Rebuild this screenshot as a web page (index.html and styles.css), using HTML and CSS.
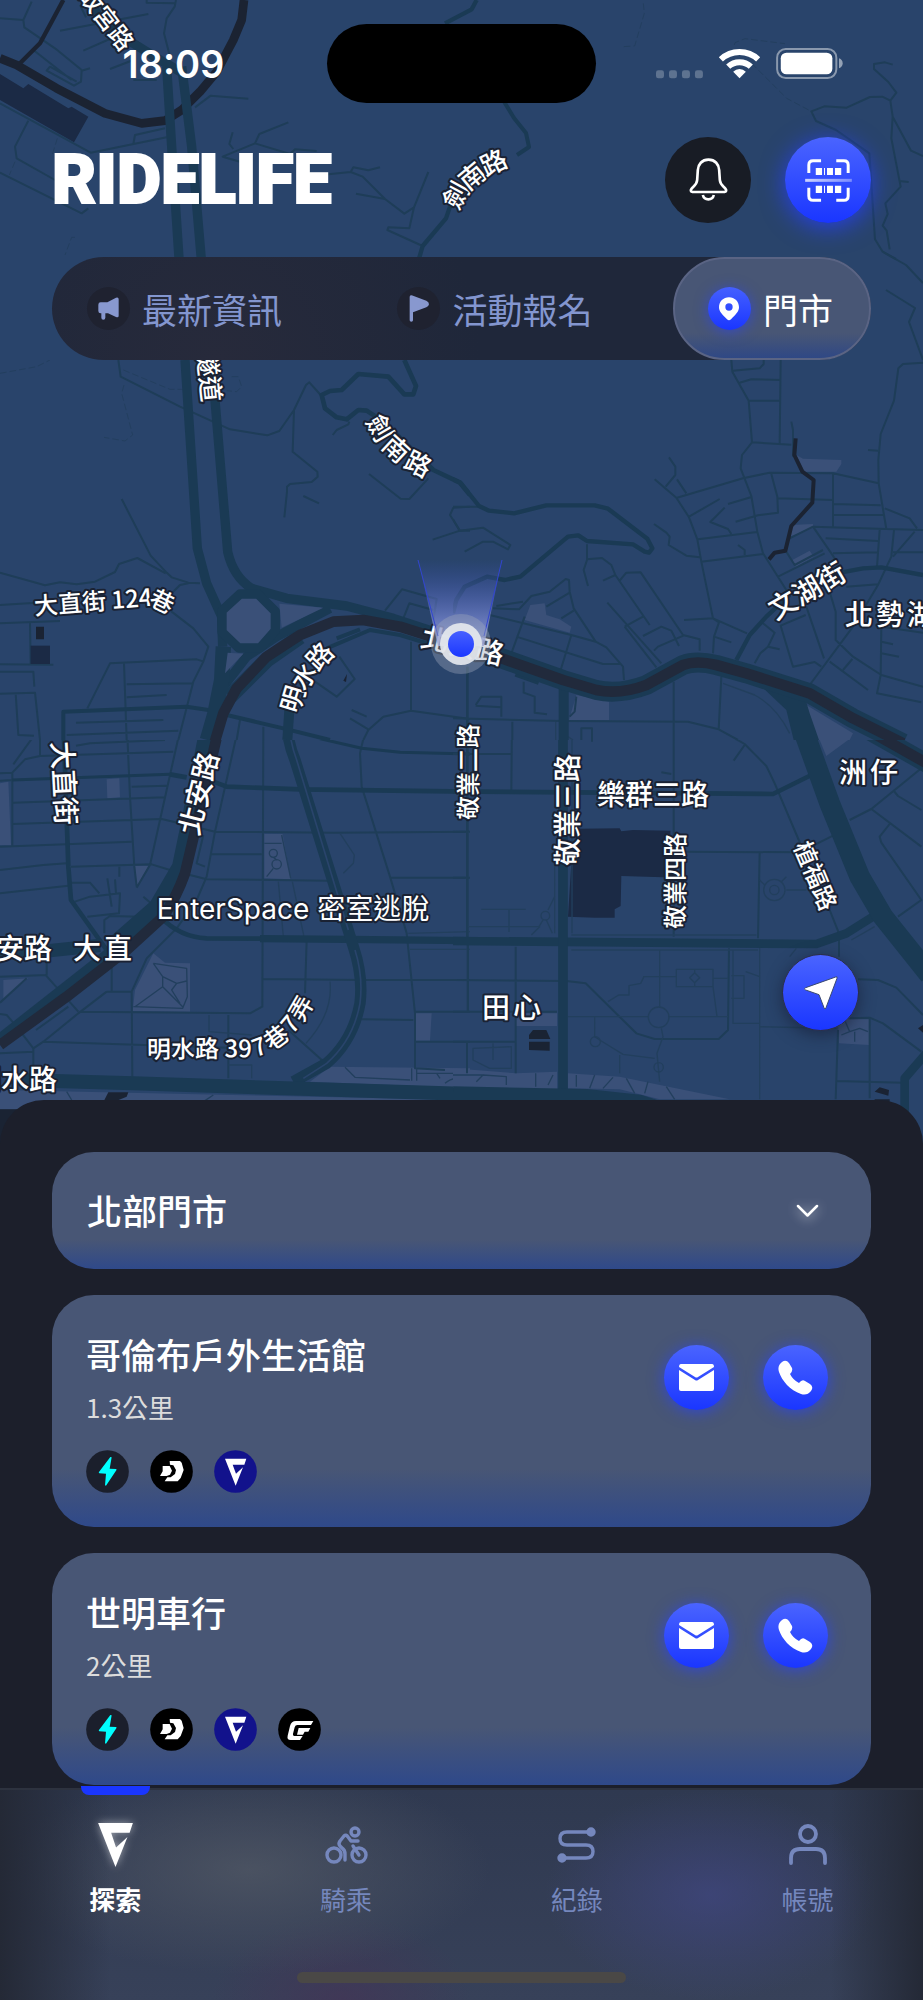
FILE: index.html
```html
<!DOCTYPE html>
<html lang="zh-Hant">
<head>
    <meta charset="UTF-8">
    <meta name="viewport" content="width=device-width, initial-scale=1.0">
    <title>RIDELIFE</title>
    <link rel="stylesheet" href="styles.css">
</head>
<body>

    <!-- Map Section -->
    <section class="map-view">
        <svg class="map" viewBox="0 0 923 1148" preserveAspectRatio="xMidYMin slice" role="img" aria-label="門市地圖">
            <defs>
                <linearGradient id="beam" x1="0" y1="0" x2="0" y2="1">
                    <stop offset="0" stop-color="#4256d8" stop-opacity="0"/>
                    <stop offset="1" stop-color="#a4aeea" stop-opacity="0.9"/>
                </linearGradient>
                <linearGradient id="dot" x1="0" y1="0" x2="0" y2="1">
                    <stop offset="0" stop-color="#4660ff"/>
                    <stop offset="1" stop-color="#1c38ff"/>
                </linearGradient>
                <path id="p-gugong" d="M86,-11 L142,61"/>
                <path id="p-jiannan1" d="M449,206 Q460,169 514,152"/>
                <path id="p-tunnel" d="M209,350 L215,408"/>
                <path id="p-jiannan2" d="M376,415 Q393,456 438,469"/>
                <path id="p-124" d="M34,604 L150,595 Q158,595 182,610"/>
                <path id="p-mingshui" d="M288,711 Q292,674 338,636"/>
                <path id="p-397" d="M147,1047 L254,1046 Q290,1036 310,984"/>
            </defs>

            <!-- North west -->
            <svg width="500" height="360" viewBox="0 0 1500 1080">
                <path class="building" d="M0,222 L70,265 L85,252 L205,325 L215,320 L265,350 L222,427 L0,300Z"/>
                <path class="lane" d="M0,310 L272,458 L500,412 M0,518 L245,640 L265,625 M85,362 L45,440 L50,475 L165,540 M95,5 L70,60 L73,82 L165,145 L245,210 L243,245 L222,257 L140,212 L150,200 L230,245 M0,55 L70,60 M270,205 L245,212 M100,150 L215,240 M180,92 L445,42 M240,15 L258,52 M250,152 L350,108 M440,0 V8 L525,10 M528,0 L524,20 L500,55 L492,100 L510,170 M330,207 L400,180 M400,240 H470 M585,322 L632,287 L745,296 M400,432 L405,405 L495,385 M865,367 L778,402 L765,430 L668,470 L720,485 M765,430 L870,462 L885,448 L950,453 M698,397 L688,432 L700,447 M985,523 L1052,516 L1060,502 L1105,511 L1140,502 M1052,516 L1088,530 L1155,597 L1213,641 L1242,622 L1285,516 M1068,581 L1155,597 M1242,622 L1228,685 L1165,682 L1162,690 L1268,738"/>
                <path class="rail" stroke-width="26" d="M0,175 L50,195 L170,265 L315,340 L425,370 L495,362 L545,330 L600,275 L650,215 L700,120 L725,60 L732,0"/>
                <path class="rail" stroke-width="13" d="M190,0 L155,65 L120,130 L60,190"/>
                <path class="road" stroke-width="28" d="M500,200 L515,440 L538,790 M545,200 L575,440 L605,790 M270,0 L300,60 L400,130 L480,180 L550,220"/>
                <path class="road" stroke-width="13" d="M1430,0 L1415,28 L1335,70 M1350,620 L1338,655 L1268,738 L1250,800"/>
                <path class="trail" d="M225,712 L215,712 L195,765 M172,415 L155,470 M45,485 L28,525"/>
            </svg>

            <!-- North east -->
            <svg x="620" width="303" height="260" viewBox="0 0 909 780">
                <path class="lane" d="M818,194 L795,187 L762,192 V207 L805,246 L829,278 L811,302 L787,290 L750,291 L680,323 L613,319 L574,334 L588,363 L648,390 L748,460 L765,718 L788,755 L828,777 M811,302 L818,350 L873,452 L909,468 M818,350 L814,415 L842,560 L796,610 L803,642 L788,677 L800,692 L809,748 M838,543 L866,546"/>
                <path class="trail" d="M70,10 L73,40 L44,138 L8,140 M343,135 L345,128 L375,116 L495,131 M395,190 L500,295 L570,332"/>
            </svg>
            <path class="road" stroke-width="4" d="M503,100 L514,118 L526,133 L529,147 L517,155"/>
            <path class="lane thin" d="M883,252 L906,265 L923,283 M886,290 L915,308 L909,322 L923,360"/>

            <!-- Middle west -->
            <svg y="360" width="470" height="380" viewBox="0 0 1410 1140">
                <path class="lane" d="M355,0 L362,50 L540,140 L690,208 L802,226 L838,213 L882,150 L918,75 L928,67 L962,105 M882,150 L878,275 L952,335 L953,350 L935,366 L870,372 L861,380 V395 L853,472 M1048,185 L1045,193 L1010,210 L998,225 M365,417 L452,587 L497,635 L515,652 L565,668 L600,670 M0,638 L135,676 L180,667 L230,673 L285,665 L345,636 L357,612 L412,594 L497,640 M565,670 L540,675 L510,705 L515,755 L580,805 L625,860 L610,905 L580,965 L535,1140 M0,735 L110,728 M0,790 L180,783 M90,790 L92,912 M0,913 L160,914 M0,935 H100 L103,980 M0,1001 L105,998 L120,1140 M47,1000 L55,1125 L102,1127 M262,1045 L330,910 L590,898 L612,905 M372,910 L380,1140 M380,973 L577,970 M380,1012 L500,1005 M1107,342 L1202,416 L1228,417 L1285,355 M910,408 L957,430 M1410,440 L1360,443 L1350,465 L1380,512 L1298,539 M1380,512 H1410 M1155,752 L1206,688 L1310,717 L1300,780 M1210,775 L1228,730 L1300,750 M1018,890 L1064,957 L1010,1010 L945,965 M1233,845 V1052 M1410,1077 L1233,1052 L1150,1070 L1105,1110 L1090,1140 M1403,920 V1140 M720,1080 L710,1140 M790,1100 V1140 M228,1088 L490,1080 M200,1125 L535,1112 M1055,1050 L1100,1070 M1050,1075 L1105,1108"/>
                <path class="trail" d="M0,40 L110,20 L150,0 M370,30 L510,88 H560 M372,75 L365,100 L398,225 L375,243 L312,232 M695,50 H715 L725,80 L710,95 L680,92"/>
                <path class="building" d="M92,857 H150 V912 H92Z"/>
                <path class="block" d="M108,800 H132 V838 H108Z M1030,962 L1041,942 L1038,966Z"/>
                <path class="road" stroke-width="12" d="M190,1140 V1055 L560,1040 L625,1050 M680,1065 L850,1105 L990,1140 M980,865 L1110,810 L1200,825 L1330,865 M1010,835 L1080,808"/>
                <path class="road" stroke-width="30" d="M868,1050 L862,1140"/>
                <path class="road" stroke-width="14" d="M1213,0 L1248,78 L1240,103 H1213 L1165,50 L1075,42 L1025,90 L990,93 L965,105 L975,145 L1010,172 L1040,178 L1075,150 L1100,152 L1150,185 L1300,330 L1380,368 L1410,405"/>
                <path class="road" stroke-width="28" d="M555,0 L592,565 L620,670 L665,770 L668,860 M640,60 L683,575 Q700,650 755,685 L860,715 L1040,738 L1180,775 L1410,850 M990,745 L830,830 L740,890 L670,980"/>
                <path class="road" stroke-width="46" d="M670,860 L665,960 L645,1060 L622,1140 M690,1010 L800,900 L900,830"/>
                <path class="park" d="M838,731 L970,743 L845,803Z M683,878 L730,881 L675,940Z"/>
                <path class="park road" stroke-width="28" d="M720,702 H774 L826,754 V812 L780,864 H716 L666,816 V752Z"/>
                <path class="highway" stroke-width="32" d="M640,1160 L670,1060 L710,985 L800,890 L900,825 L1000,785 L1090,780 L1200,800 L1320,838 L1420,870"/>
            </svg>

            <!-- Middle east -->
            <svg x="453" y="360" width="470" height="380" viewBox="0 0 1410 1140">
                <path class="park" d="M1030,285 L1050,296 L1165,300 V312 L1150,335 H1055Z M1015,495 L1080,492 V500 L1010,530Z M1018,600 L1070,572 L1082,590 L1028,620Z M232,735 L275,730 L280,765 L320,778 L355,800 L350,818 L215,780Z M370,1005 L468,1025 V1080 H348Z M1060,1035 L1200,1120 L1190,1140 H1090Z"/>
                <path class="lane" d="M835,0 L838,35 L887,122 L897,247 L867,285 L863,325 L895,408 L913,515 L930,580 L1000,690 M840,32 L920,25 L932,12 V0 M860,68 L895,58 L983,60 M887,122 H983 M983,0 L980,250 M897,247 L1015,254 M1015,185 L1020,210 V290 M672,413 L870,355 L950,338 L1140,340 L1277,370 M1410,8 L1350,12 L1336,25 L1323,122 L1283,222 L1276,300 L1277,370 L1300,507 L1410,510 M1245,270 L1275,272 M605,358 L670,413 L708,472 L733,538 L745,605 L780,775 L882,820 M648,292 L667,320 V345 L638,380 M672,358 L700,400 M708,470 L800,417 M735,538 L912,516 M745,605 L930,582 M603,492 L640,518 L650,530 L647,555 L700,587 L740,592 M848,485 L915,466 L975,458 L973,410 L955,342 M825,432 L893,412 M815,443 L772,486 L825,507 L835,522 M973,415 L1140,420 M1140,340 V500 M1140,432 L1283,436 M1140,465 H1290 M975,650 L1115,580 M1010,535 L1080,500 L1300,507 M1080,500 L1135,580 L1155,610 M1000,575 L1025,615 L1110,570 M1118,535 L1275,543 M1140,580 L1275,577 M1280,510 L1272,620 M1323,510 L1315,590 L1275,675 L1200,800 L1070,975 M1295,445 L1370,475 L1392,505 M1385,515 L1320,590 M1320,577 H1410 M1180,680 L1275,673 M1130,695 L1148,755 V840 L1200,890 L1285,945 L1410,980 M1060,740 L1113,895 M1058,765 L983,797 L1020,920 L1085,906 L1105,920 M1285,800 L1283,945 L1272,1000 L1405,1027 M1285,800 L1410,818 M1285,845 L1320,853 M1285,880 L1338,890 M1130,905 L1245,990 M1198,897 L1170,930 M905,910 L922,880 L945,860 L965,818 L930,790 M945,860 L980,868 M693,780 L780,775 L798,787 L783,830 L780,880 M783,830 L835,847 M855,555 L875,570 V585"/>
                <path class="lane" d="M402,553 V600 L392,630 L405,678 M402,598 L447,594 L475,615 L487,645 L450,662 M487,645 L590,795 M690,825 L740,838 V872 M500,662 L520,638 L563,637 L690,825 M463,728 L625,910 M515,800 L570,770 M515,800 L610,922 M570,828 L625,800 L655,812 L678,858 M603,872 L615,860 L693,826 M120,745 L198,748 L235,708 L290,695 L338,657 L348,660 L350,695 L362,745 L428,845 L460,862 L510,920 L513,960 M280,740 L350,698 M110,765 L355,825 L428,845 M325,775 L362,752 M190,830 L450,912 H505 M355,825 L323,930 M215,770 L175,880 M130,738 L210,725 M0,440 H75 M0,478 L20,512 L90,503 L172,555 L165,568 L120,545 H90 L35,575 M0,1075 L330,1083 L705,1085 L797,1108 L855,1140 M662,965 V1140 M805,950 L797,1108 M42,920 V1140 M68,1035 L85,1010 H145 V1070 M68,1037 L145,1042 M178,1085 V1140 M212,965 V998 L245,1010 V1058 L282,1063 M370,1010 L365,1055 L350,1070 M385,1140 V1105 H417 V1140"/>
                <path class="footpath" d="M810,970 L905,1005 Q970,1040 1010,1120 M308,1085 V1140 M345,1130 L360,1140"/>
                <path class="road" stroke-width="13" d="M0,358 L22,368 L78,438 L108,452 L183,460 L280,436 H425 L465,446 L583,536 L598,565 L588,578 L575,575 L540,553 L402,543 L376,526 L345,530 L202,650 L155,660 L102,650 L35,680 L10,720 L0,760 M850,900 L890,825 L940,770 L1010,705 M1150,640 L1230,625 L1285,622 L1410,645"/>
                <path class="road" stroke-width="30" d="M332,970 V1140 M190,935 L260,960"/>
                <path class="road-fill" d="M900,955 L1055,1010 L1070,1060 L1098,1140 H1022 L1000,1050Z"/>
                <path class="rail" stroke-width="12" d="M1028,235 L1024,285 L1048,335 L1082,360 L1078,428 L1015,498 L997,572 L965,578 L948,598"/>
                <path class="road" stroke-width="60" d="M-10,838 L160,900 L330,960 L430,990 Q500,1005 580,975 L690,915 Q730,900 790,915 L880,940 L1070,1000 L1200,1075 L1350,1150"/>
                <path class="highway" stroke-width="32" d="M-10,838 L160,900 L330,960 L430,990 Q500,1005 580,975 L690,915 Q730,900 790,915 L880,940 L1070,1000 L1200,1075 L1350,1150"/>
            </svg>

            <!-- South west -->
            <svg y="740" width="470" height="408" viewBox="0 60 1410 1224">
                <path class="park" d="M0,190 L25,185 L33,375 H0Z M320,178 L358,175 L360,232 L322,235Z M793,342 H848 L872,478 L793,475Z M405,438 H445 L410,500Z M10,780 L85,775 L10,838Z M460,700 L495,728 L570,730 V875 L398,873 L405,810Z M1245,880 H1295 L1290,962 H1248Z M990,1040 L1410,1045 V1104 L930,1085Z M0,1110 L1410,1140 V1168 H0Z"/>
                <path class="block" d="M0,1168 H200 V1284 H0Z M325,1117 H385 L380,1130 L350,1142 H312Z"/>
                <path class="lane" d="M380,0 L390,230 L403,440 L410,500 M547,0 L510,165 L450,435 L410,503 M205,45 L537,32 M228,77 L270,70 L495,60 M0,160 L37,158 L75,118 L120,108 L520,95 M120,0 V105 M102,47 L40,133 M37,160 V378 M0,182 L37,180 M40,248 L493,232 M37,312 L485,297 L645,335 L1000,338 L1410,335 M0,380 L395,365 M0,450 L130,435 L200,430 M213,440 L455,433 L510,450 M0,520 L205,497 M395,200 L500,197 M720,0 L645,335 L620,470 L590,540 L530,625 L440,715 L395,815 M235,880 L130,965 L100,985 L50,920 L20,885 L0,882 M570,465 L620,478 L985,482 M635,403 H785 M790,20 L787,860 L750,880 L240,875 M610,345 L590,430 L615,440 M920,660 L915,820 M787,777 L1085,780 H1410 M395,815 L397,1070 M235,875 L135,763 M320,815 H395 M320,815 L235,880 M335,730 V815 M140,720 V765 L0,770 M80,775 L0,848 M130,965 L685,983 V1075 M100,985 V1060 M0,1000 L100,995 M685,885 V983 M108,930 L205,860 M865,930 L968,1022 M1140,0 L1095,35 L1080,100 L1085,200 L1170,470 L1220,640 L1245,880 V1045 L1335,1050 M1170,473 H1410 M1085,898 L1240,900 M1245,875 H1410 M1245,965 H1410 M1403,0 V875 M215,488 H270 L298,520 M225,545 L270,530 L360,520 L357,580 L262,590 M322,475 L335,560 M358,440 V470 M345,478 L348,520 M313,640 V600 L330,588 L420,590 M430,530 L465,560"/>
                <path class="footpath" d="M835,485 L850,650 M877,485 L912,650 M845,345 L872,475 M1020,340 L1063,405 L1060,430 L1030,460 M990,785 Q1000,880 918,970 M627,885 V935 L755,945 M685,1035 H755 V1075 M460,730 L560,745 L562,830 L548,865 L400,860 M405,860 L488,800 L548,860 M460,730 L488,770 V800 M488,770 L530,790 L560,783 M530,790 L515,810 L540,850 M793,370 H845 M820,412 L830,420 M820,445 L800,470 M1035,1042 L1065,1072 L1230,1080 M1235,1045 V1082 M1250,1045 V1082 M1250,1060 H1400 M1310,1060 L1320,1075 M1335,1090 Q1370,1060 1400,1095 M1225,640 L1410,635 M1230,688 H1410 M200,1115 L215,1140 M640,1125 L615,1142"/>
                <circle class="footpath" cx="820" cy="400" r="12"/>
                <circle class="footpath" cx="830" cy="433" r="14"/>
                <path class="road" stroke-width="14" d="M190,0 L205,440 L213,540 L320,690 M640,185 L680,200 L900,208 L1410,215 M510,163 L560,172 M480,590 Q540,652 620,655 L800,656"/>
                <path class="road" stroke-width="9" d="M37,180 L510,163 M730,0 L870,35 L1085,85 L1200,97 L1410,102"/>
                <path class="road" stroke-width="22" d="M780,656 L1040,658 L1410,662"/>
                <path class="road" stroke-width="34" d="M862,0 Q860,60 885,120 L1060,680 Q1090,770 1080,850 Q1060,960 980,1030 L880,1085"/>
                <path class="median" d="M870,40 Q875,80 890,120 L1045,630 M1065,690 Q1090,770 1080,850 Q1060,960 980,1030 L910,1075"/>
                <path class="road" stroke-width="40" d="M0,694 L150,692 L300,676"/>
                <path class="road" stroke-width="48" d="M628,0 L565,320 L540,440 L470,560 L350,665"/>
                <path class="road" stroke-width="30" d="M350,680 L0,955"/>
                <path class="road" stroke-width="42" d="M60,1080 L400,1090 L1410,1122"/>
                <path class="highway" stroke-width="32" d="M662,0 L600,270 L555,460 Q530,530 490,590 L380,690 L200,830 L0,975"/>
            </svg>

            <!-- South east -->
            <svg x="453" y="740" width="470" height="408" viewBox="0 60 1410 1224">
                <path class="park" d="M188,880 H312 V918 H188Z M1075,0 H1165 L1210,42 L1120,108Z M0,1045 L190,1060 L312,1055 V1108 L0,1104Z M345,1060 L500,1070 L830,1138 H620 L500,1108 L345,1105Z M1155,898 H1250 L1248,975 L1158,970Z"/>
                <path class="building" d="M375,326 L500,325 L505,334 L540,330 L652,332 V470 L630,472 L505,468 L503,558 L485,568 V593 L425,593 L345,590 L355,430Z"/>
                <path class="block" d="M228,945 L240,930 H280 L292,957 H228Z M228,965 H290 V992 L228,990Z M1265,1115 L1280,1102 L1308,1110 L1306,1127Z M1265,1138 H1310 V1145 H1265Z M1395,925 L1410,915 V938Z"/>
                <path class="lane" d="M705,5 L797,28 L875,72 L940,138 L965,190 L1050,390 M662,0 V650 M875,75 L842,122 M797,0 V28 M177,0 L175,210 M42,0 V650 M0,102 H175 M0,335 H38 M0,473 H38 M692,395 L1040,397 L1140,347 M920,397 L915,655 M1130,570 L1158,640 V710 M1155,930 L1148,1138 M0,780 L340,783 L398,790 L550,940 L605,957 H797 L825,930 L828,685 M45,675 V875 M0,875 H312 M188,680 V1060 M0,965 H185 M42,965 V1060 M1215,778 L1275,780 L1330,803 L1410,885 M1190,895 L1250,893 L1290,910 L1405,995 M1250,895 V1135 M1150,1083 L1350,1088 M1190,300 L1255,267 L1405,145 M1255,267 L1405,380 M1320,210 L1335,228 L1405,270 M1310,312 L1280,350 L1285,368 L1405,540 L1335,590 M625,157 L655,162 M385,25 H417 V65"/>
                <path class="footpath" d="M85,568 H218 M168,568 V636 M45,620 H260 L235,645 M305,410 V640 M305,530 L285,570 M270,600 L258,620 M280,600 L298,640 M620,690 V860 M345,890 H585 M645,890 H825 M780,800 L792,890 M570,770 H670 M780,775 H825 M465,845 L497,825 H528 V797 L563,790 L573,770 M670,748 H780 V800 H670Z M725,758 L740,773 L725,788 L710,773Z M725,748 V758 M725,788 V800 M625,925 L630,950 L612,1000 L620,1085 M425,890 V950 L440,960 L510,1003 L605,1015 M500,1005 V1060 M355,690 H915 M355,645 H910 M920,680 V1138 M840,690 V910 H920 M920,920 L1150,925 M60,985 L175,980 V1045 L110,1045 L60,1020Z M120,970 V1020 M345,50 H357 V640 M835,767 H873 V835 H835 M878,755 L920,770 M1000,510 H1060 M920,480 L935,495 M985,485 L1000,470 M1195,660 L1265,620 M1010,710 L1030,685 M0,1065 L90,1065 L70,1085 M90,1065 L160,1070 V1095 M248,1060 V1100 M300,1065 L285,1095 M370,1065 V1100 M425,1065 L410,1105 M480,1072 L450,1105 M520,1075 L545,1120 M585,1085 L575,1120 M640,1100 L665,1138 M1175,900 L1190,935 L1165,945 M1190,935 L1220,925 L1245,935 M1205,935 V965"/>
                <circle class="footpath" cx="617" cy="892" r="31"/>
                <circle class="footpath" cx="964" cy="510" r="32"/>
                <circle class="footpath" cx="964" cy="510" r="14"/>
                <circle class="footpath" cx="277" cy="587" r="13"/>
                <circle class="footpath" cx="427" cy="965" r="15"/>
                <circle class="footpath" cx="617" cy="1042" r="14"/>
                <path class="road" stroke-width="14" d="M0,214 L80,215 L960,222 L1075,165"/>
                <path class="road" stroke-width="26" d="M0,663 L600,668 L1090,672 L1180,640 L1260,590 M1355,1284 V1075 L1420,1000"/>
                <path class="road" stroke-width="29" d="M330,0 V1110"/>
                <path class="road" stroke-width="62" d="M1040,0 L1130,250 L1220,470 L1290,590 L1430,765"/>
                <path class="road" stroke-width="42" d="M0,1120 L400,1128 L560,1145 L700,1190"/>
                <path class="road" stroke-width="56" d="M1170,-12 L1430,135"/>
                <path class="highway" stroke-width="32" d="M1170,-12 L1430,135"/>
            </svg>

            <!-- Labels -->
            <g class="labels">
                <text class="small"><textPath href="#p-gugong">故宮路</textPath></text>
                <text class="curved"><textPath href="#p-jiannan1">劍南路</textPath></text>
                <text class="curved"><textPath href="#p-tunnel">隧道</textPath></text>
                <text class="curved"><textPath href="#p-jiannan2">劍南路</textPath></text>
                <text class="small"><textPath href="#p-124">大直街 124巷</textPath></text>
                <text class="curved"><textPath href="#p-mingshui">明水路</textPath></text>
                <text class="small"><textPath href="#p-397">明水路 397巷7弄</textPath></text>
                <text class="mid" transform="translate(463 644) rotate(13)">北安路</text>
                <text class="mid" transform="translate(806 589) rotate(-30)">文湖街</text>
                <text class="mid" x="859 890 921" y="613">北勢湖</text>
                <text class="mid" x="853 884" y="771">洲仔</text>
                <text class="mid" x="653" y="793">樂群三路</text>
                <text class="mid small" transform="translate(466 772) rotate(-90)">敬業二路</text>
                <text class="mid" transform="translate(566 810) rotate(-90)">敬業三路</text>
                <text class="mid small" transform="translate(673 881) rotate(-90)">敬業四路</text>
                <text class="mid small" transform="translate(817 875) rotate(67)">植福路</text>
                <text class="mid place" x="293" y="909">EnterSpace 密室逃脫</text>
                <text class="mid" x="87 118" y="947">大直</text>
                <text class="mid" x="-17 10 38" y="947">北安路</text>
                <text class="mid" transform="translate(66 783) rotate(87)">大直街</text>
                <text class="mid" transform="translate(197 793) rotate(-76)">北安路</text>
                <text class="mid" x="-13 15 43" y="1078">明水路</text>
                <text class="mid" x="496 527" y="1006">田心</text>
            </g>

            <!-- Current position -->
            <path d="M418,560 H502 L484,646 H438Z" fill="url(#beam)"/>
            <path class="beam-edge" d="M418,560 L438,636 M502,560 L484,636"/>
            <circle cx="461" cy="644" r="30" fill="#9aa6b8" fill-opacity="0.4"/>
            <circle cx="461" cy="644" r="21" fill="#e4e7ed" fill-opacity="0.93"/>
            <circle cx="461" cy="644" r="13" fill="url(#dot)"/>
        </svg>

        <!-- Status Bar -->
        <div class="status-bar">
            <time class="clock">18:09</time>
            <div class="island"></div>
            <svg class="status-icons" viewBox="0 0 562 93" role="img" aria-label="Wi-Fi 與電池">
                <g fill="#fff" fill-opacity="0.25">
                    <rect x="0" y="67" width="24" height="24" rx="7"/>
                    <rect x="39" y="67" width="24" height="24" rx="7"/>
                    <rect x="78" y="67" width="24" height="24" rx="7"/>
                    <rect x="117" y="67" width="24" height="24" rx="7"/>
                </g>
                <path d="M195,34 A82,82 0 0 1 307,34 M217,56 A50,50 0 0 1 285,56" fill="none" stroke="#fff" stroke-width="18"/>
                <path d="M251,91 L232,71 A27,27 0 0 1 270,71Z" fill="#fff"/>
                <rect x="364" y="3" width="178" height="87" rx="26" fill="none" stroke="#fff" stroke-opacity="0.45" stroke-width="6"/>
                <rect x="375" y="14" width="155" height="65" rx="17" fill="#fff"/>
                <path d="M550,31 Q561,35 561,46 Q561,57 550,61Z" fill="#fff" fill-opacity="0.5"/>
            </svg>
        </div>

        <!-- Header -->
        <header class="header">
            <h1 class="logo">RIDELIFE</h1>
            <button class="round-btn dark" type="button" aria-label="通知">
                <svg width="39" height="44" viewBox="0 0 116 132" fill="none" stroke="#fff" stroke-width="8" stroke-linejoin="round">
                    <path d="M58,5 C38,5 27,19 26,36 L24,66 C23,80 15,84 8,91 Q1,100 10,102 H106 Q115,100 108,91 C101,84 93,80 92,66 L90,36 C89,19 78,5 58,5Z"/>
                    <path d="M41,111 A17,17 0 0 0 74,111"/>
                </svg>
            </button>
            <button class="round-btn glow" type="button" aria-label="掃描">
                <svg width="47" height="43" viewBox="0 0 141 130">
                    <defs>
                        <linearGradient id="scan" x1="0" y1="0" x2="1" y2="0">
                            <stop offset="0" stop-color="#fff" stop-opacity="0.75"/>
                            <stop offset="1" stop-color="#fff" stop-opacity="0.35"/>
                        </linearGradient>
                    </defs>
                    <path d="M11,42 V18 Q11,5 24,5 H48 M94,5 H117 Q130,5 130,18 V42 M11,87 V112 Q11,125 24,125 H48 M94,125 H117 Q130,125 130,112 V87" fill="none" stroke="#fff" stroke-width="9"/>
                    <path d="M32,27 H51 V48 H32Z M57,27 H60 V48 H57Z M66,27 H84 V48 H66Z M90,27 H109 V48 H90Z M32,81 H51 V103 H32Z M57,81 H60 V103 H57Z M66,81 H84 V103 H66Z M90,81 H109 V103 H90Z" fill="#fff"/>
                    <rect y="60" width="141" height="9" fill="url(#scan)"/>
                </svg>
            </button>
        </header>

        <!-- Category Tabs -->
        <div class="tabs">
            <button class="tab" type="button">
                <span class="tab-icon">
                    <svg width="21" height="23" viewBox="0 0 63 69" fill="#8898cf"><path d="M8,16 H28 L54,2 Q62,-1 62,7 V56 Q62,63 54,60 L30,49 H22 V62 Q22,68 16,68 Q10,68 10,62 V49 H8 Q1,49 1,42 V23 Q1,16 8,16Z"/></svg>
                </span>
                最新資訊
            </button>
            <button class="tab" type="button">
                <span class="tab-icon">
                    <svg width="20" height="27" viewBox="0 0 60 81" fill="#8898cf"><path d="M2,5 Q2,1 8,1 L52,17 Q60,21 60,28 Q59,34 52,37 L12,52 V76 Q12,80 7,80 Q2,80 2,76Z"/></svg>
                </span>
                活動報名
            </button>
            <button class="tab active" type="button">
                <span class="tab-icon">
                    <svg width="20" height="24" viewBox="0 0 60 70" fill="#fff"><path fill-rule="evenodd" d="M30,0 C13,0 0,13 0,30 C0,43 10,52 24,66 Q30,72 36,66 C50,52 60,43 60,30 C60,13 47,0 30,0Z M30,18 A11,11 0 0 1 30,40 A11,11 0 0 1 30,18Z"/></svg>
                </span>
                門市
            </button>
        </div>

        <button class="locate-btn" type="button" aria-label="目前位置">
            <svg width="36" height="36" viewBox="0 0 108 108"><path d="M98,6 Q104,3 102,10 L69,98 Q66,106 63,98 L48,59 L8,45 Q0,42 8,38Z" fill="#fff" stroke="#3a4a70" stroke-width="3"/></svg>
        </button>
    </section>

    <!-- Shop List -->
    <main class="sheet">
        <div class="region">
            <select class="region-select" id="region" aria-label="地區">
                <option>北部門市</option>
            </select>
            <svg class="chevron" width="23" height="14" viewBox="0 0 23 14" fill="none" stroke="#fff" stroke-width="2.5" stroke-linecap="round" stroke-linejoin="round"><path d="M2,2 L11.5,11.5 L21,2"/></svg>
        </div>

        <article class="card">
            <div class="card-info">
                <h2>哥倫布戶外生活館</h2>
                <p>1.3公里</p>
                <div class="badges">
                    <svg class="badge" viewBox="0 0 129 129"><use href="#brand-bolt"/></svg>
                    <svg class="badge" viewBox="0 0 129 129"><use href="#brand-d"/></svg>
                    <svg class="badge" viewBox="0 0 129 129"><use href="#brand-v"/></svg>
                </div>
            </div>
            <button class="action-btn" type="button" aria-label="寄信"><svg width="35" height="27"><use href="#icon-mail"/></svg></button>
            <button class="action-btn" type="button" aria-label="撥打電話"><svg width="35" height="35"><use href="#icon-phone"/></svg></button>
        </article>

        <article class="card">
            <div class="card-info">
                <h2>世明車行</h2>
                <p>2公里</p>
                <div class="badges">
                    <svg class="badge" viewBox="0 0 129 129"><use href="#brand-bolt"/></svg>
                    <svg class="badge" viewBox="0 0 129 129"><use href="#brand-d"/></svg>
                    <svg class="badge" viewBox="0 0 129 129"><use href="#brand-v"/></svg>
                    <svg class="badge" viewBox="0 0 129 129"><use href="#brand-g"/></svg>
                </div>
            </div>
            <button class="action-btn" type="button" aria-label="寄信"><svg width="35" height="27"><use href="#icon-mail"/></svg></button>
            <button class="action-btn" type="button" aria-label="撥打電話"><svg width="35" height="35"><use href="#icon-phone"/></svg></button>
        </article>
    </main>

    <!-- Bottom Navigation -->
    <nav class="bottom-nav">
        <div class="nav-items">
            <a class="nav-item active" href="#explore">
                <svg width="35" height="44" viewBox="0 0 64 81" fill="#fff"><path d="M0,0 H64 L58,18 H24 L33,45 L54,26 L32,81Z"/></svg>
                探索
            </a>
            <a class="nav-item" href="#ride">
                <svg width="43" height="38" viewBox="0 0 43 38" fill="none" stroke="currentColor" stroke-width="3.4" stroke-linecap="round" stroke-linejoin="round">
                    <circle cx="9" cy="29" r="7"/>
                    <circle cx="34" cy="29" r="7"/>
                    <circle cx="30" cy="6" r="4"/>
                    <path d="M20,34 V28 Q20,24 17,22 L15,20 Q13,18 15,15 L19,10 Q21,8 23,11 L26,15 H33 M28,20 L34,29"/>
                </svg>
                騎乘
            </a>
            <a class="nav-item" href="#records">
                <svg width="39" height="36" viewBox="0 0 39 36" fill="none" stroke="currentColor" stroke-width="3.4">
                    <path d="M34,5 H10 Q3,5 3,11.5 Q3,18 10,18 H29 Q36,18 36,24.5 Q36,31 29,31 H5"/>
                    <circle cx="34" cy="5" r="3" fill="currentColor"/>
                    <circle cx="5" cy="31" r="3" fill="currentColor"/>
                </svg>
                紀錄
            </a>
            <a class="nav-item" href="#account">
                <svg width="38" height="42" viewBox="0 0 38 42" fill="none" stroke="currentColor" stroke-width="3.8" stroke-linecap="round">
                    <circle cx="19" cy="10" r="8"/>
                    <path d="M2,39 V34 Q2,25 11,25 H27 Q36,25 36,34 V39"/>
                </svg>
                帳號
            </a>
        </div>
        <div class="home-bar"></div>
    </nav>

    <!-- Shared icons -->
    <svg class="sprite" aria-hidden="true">
        <symbol id="icon-mail" viewBox="0 0 35 27">
            <path fill="#fff" d="M2,0 H33 Q35,0 35,3 L19,13 Q17.5,14 16,13 L0,3 Q0,0 2,0Z M0,6 L16,16 Q17.5,17 19,16 L35,6 V25 Q35,27 33,27 H2 Q0,27 0,25Z"/>
        </symbol>
        <symbol id="icon-phone" viewBox="0 0 35 35">
            <path fill="#fff" d="M4,2 Q8,-1 11,3 L14,8 Q15,11 12,14 Q15,20 21,23 Q24,19 27,21 L32,24 Q36,27 33,31 Q29,36 23,34 C12,30 4,21 1,12 Q-1,6 4,2Z"/>
        </symbol>
        <symbol id="brand-bolt" viewBox="0 0 129 129">
            <circle cx="64.5" cy="64.5" r="64" fill="#1b1f2c"/>
            <path fill="#0ff" d="M73,21 L77,22 L71,56 L90,57 Q93,58 91,61 L60,107 L57,106 L60,71 L40,70 Q37,69 39,66Z"/>
        </symbol>
        <symbol id="brand-d" viewBox="0 0 129 129">
            <circle cx="64.5" cy="64.5" r="64" fill="#000"/>
            <path fill="#fff" d="M59,33 H90 L95,38 L101,60 L92,84 L83,94 H44 L52,82 H62 L75,72 L78,60 L70,46 L60,44Z M38,48 H59 L66,62 L60,74 L50,78 H30 L38,64Z"/>
        </symbol>
        <symbol id="brand-v" viewBox="0 0 129 129">
            <circle cx="64.5" cy="64.5" r="64" fill="#12128c"/>
            <path fill="#fff" d="M33,26 H97 L91,44 H56 L66,71 L87,52 L65,107Z"/>
        </symbol>
        <symbol id="brand-g" viewBox="0 0 129 129">
            <circle cx="64.5" cy="64.5" r="64" fill="#000"/>
            <path fill="#fff" d="M106,39 L99,51 H58 Q52,51 50,58 L45,77 Q44,84 51,84 H74 L66,96 H38 Q26,96 29,83 L36,54 Q40,39 54,39Z M62,60 H97 L91,71 H80 L75,80 H57Z"/>
        </symbol>
    </svg>

</body>
</html>
```
FILE: styles.css
```css
/* General Styles */
* {
    margin: 0;
    padding: 0;
    box-sizing: border-box;
}
body {
    background-color: #1c1e2a;
    color: #fff;
    font-family: "Noto Sans CJK TC", sans-serif;
    display: flex;
    flex-direction: column;
    min-height: 100vh;
    overflow-x: hidden;
}
button {
    border: none;
    color: inherit;
    font-family: inherit;
    cursor: pointer;
}
.sprite {
    display: none;
}

/* Map */
.map-view {
    position: relative;
    display: flex;
    flex-direction: column;
    min-height: 55vh;
    padding: 24px 52px 0;
}
.map {
    position: absolute;
    top: 0;
    left: 0;
    width: 100%;
    height: calc(100% + 48px);
    background-color: #29446b;
}
.map path,
.map .footpath {
    stroke-linejoin: round;
}
.road,
.rail,
.highway,
.lane,
.trail,
.footpath,
.median,
.beam-edge {
    fill: none;
}
.road {
    stroke: #1a3a54;
}
.road-fill {
    fill: #1a3a54;
}
.highway {
    stroke: #212a3c;
}
.rail {
    stroke: #1b2332;
}
.lane {
    stroke: #1e3d58;
    stroke-width: 6;
}
.lane.thin {
    stroke-width: 2;
}
.footpath {
    stroke: #223f5d;
    stroke-width: 4;
}
.trail {
    stroke: #233f5f;
    stroke-width: 3;
    stroke-dasharray: 20 9;
}
.median {
    stroke: #29446b;
    stroke-width: 5;
}
.park {
    fill: #3a5078;
}
.building {
    fill: #1b2a45;
}
.block {
    fill: #1a2333;
}
.beam-edge {
    stroke: #3145d0;
}

/* Map Labels */
.labels text {
    font-size: 28px;
    font-weight: 500;
    fill: #fff;
    stroke: #1a2233;
    stroke-width: 4px;
    stroke-linejoin: round;
    paint-order: stroke;
    dominant-baseline: central;
}
.labels .mid {
    text-anchor: middle;
}
.labels .curved {
    font-size: 26px;
}
.labels .small {
    font-size: 24px;
}
.labels .place {
    font-family: Inter, "Noto Sans CJK TC", sans-serif;
    font-size: 28px;
    font-weight: 400;
}

/* Status Bar */
.status-bar {
    position: relative;
    display: grid;
    grid-template-columns: 1fr auto 1fr;
    align-items: center;
    justify-items: center;
    margin: 0 -32px;
}
.clock {
    font-family: Inter, sans-serif;
    font-size: 38px;
    font-weight: 600;
}
.island {
    width: 269px;
    height: 79px;
    border-radius: 40px;
    background-color: #000;
}
.status-icons {
    width: 187px;
    height: 31px;
}

/* Header */
.header {
    position: relative;
    display: flex;
    align-items: center;
    gap: 34px;
    margin-top: 34px;
}
.logo {
    flex-grow: 1;
    font-family: Roboto, sans-serif;
    font-size: 68px;
    font-weight: 900;
    line-height: 86px;
    -webkit-text-stroke: 2px #fff;
}
.round-btn {
    display: flex;
    align-items: center;
    justify-content: center;
    width: 86px;
    height: 86px;
    border-radius: 50%;
}
.round-btn.dark {
    background-color: #181c25;
}
.round-btn.glow {
    background: linear-gradient(#4a64ff, #1a36ff);
    box-shadow: 0 4px 24px rgba(38, 64, 255, 0.85);
}

/* Category Tabs */
.tabs {
    position: relative;
    display: flex;
    justify-content: space-between;
    margin-top: 34px;
    border-radius: 52px;
    background: radial-gradient(circle at 20% 100%, #272a3b, #1f273a 40%);
}
.tab {
    display: flex;
    align-items: center;
    gap: 12px;
    height: 103px;
    padding: 0 36px 0 33px;
    border: 2px solid transparent;
    border-radius: 52px;
    background: none;
    color: #8396cf;
    font-size: 35px;
    line-height: 42px;
    white-space: nowrap;
}
.tab.active {
    background: linear-gradient(#485675 75%, #2f4885);
    border-color: #5a6484;
    color: #fff;
}
.tab-icon {
    display: flex;
    align-items: center;
    justify-content: center;
    width: 43px;
    height: 43px;
    border-radius: 50%;
    background-color: #1f2230;
}
.tab.active .tab-icon {
    background: linear-gradient(#4560ff, #1a36ff);
    box-shadow: 0 2px 14px rgba(38, 64, 255, 0.6);
}

.locate-btn {
    position: relative;
    display: flex;
    align-items: center;
    justify-content: center;
    align-self: flex-end;
    width: 77px;
    height: 77px;
    margin: auto 12px 69px 0;
    border: 1px solid #2a2c4a;
    border-radius: 50%;
    background: linear-gradient(#4a64ff, #1a36ff);
    box-shadow: 0 4px 16px rgba(20, 26, 50, 0.6);
}

/* Shop List */
.sheet {
    position: relative;
    flex-grow: 1;
    display: flex;
    flex-direction: column;
    gap: 26px;
    padding: 52px 52px 3px;
    border-radius: 44px 44px 0 0;
    background-color: #1c1f2b;
}
.region {
    position: relative;
}
.region-select {
    display: block;
    width: 100%;
    height: 117px;
    padding: 0 35px 2px;
    border: none;
    border-radius: 42px;
    appearance: none;
    background: linear-gradient(#485675 75%, #2f498a);
    color: #fff;
    font-family: inherit;
    font-size: 35px;
    font-weight: 500;
}
.chevron {
    position: absolute;
    top: 52px;
    right: 52px;
    filter: drop-shadow(0 2px 6px rgba(255, 255, 255, 0.7));
    pointer-events: none;
}
.card {
    display: flex;
    gap: 34px;
    padding: 38px 43px 34px 34px;
    border-radius: 42px;
    background: linear-gradient(#485675 75%, #2f498a);
}
.card-info {
    flex-grow: 1;
}
.card h2 {
    font-size: 35px;
    font-weight: 500;
    line-height: 42px;
}
.card p {
    margin-top: 16px;
    color: #dcdcdc;
    font-size: 26px;
    line-height: 32px;
}
.badges {
    display: flex;
    gap: 21px;
    margin-top: 27px;
}
.badge {
    width: 43px;
    height: 43px;
}
.action-btn {
    display: flex;
    align-items: center;
    justify-content: center;
    width: 65px;
    height: 65px;
    margin-top: 12px;
    border-radius: 50%;
    background: linear-gradient(#4a64ff, #1a36ff);
    box-shadow: 0 2px 16px rgba(38, 64, 255, 0.7);
}

/* Bottom Navigation */
.bottom-nav {
    position: relative;
    padding: 31px 0 17px;
    border-top: 2px solid #2d323f;
    background:
        linear-gradient(to right, #242936, transparent 12%, transparent 90%, #242936),
        radial-gradient(ellipse 26% 50% at 27% 38%, rgba(84, 91, 103, 0.7), transparent),
        radial-gradient(ellipse 18% 50% at 77% 50%, rgba(66, 72, 135, 0.65), transparent),
        radial-gradient(ellipse 14% 40% at 37% 100%, rgba(68, 52, 86, 0.7), transparent),
        linear-gradient(#2f3950, #374159);
}
.nav-items {
    display: grid;
    grid-template-columns: repeat(4, 1fr);
}
.nav-item {
    position: relative;
    display: grid;
    grid-template-rows: 48px 32px;
    row-gap: 14px;
    align-items: center;
    justify-items: center;
    color: #7587bd;
    font-size: 26px;
    line-height: 32px;
    text-decoration: none;
}
.nav-item.active {
    color: #fff;
    font-weight: 700;
}
.nav-item.active svg {
    filter: drop-shadow(0 0 4px rgba(255, 255, 255, 0.5));
}
.nav-item.active::before {
    content: "";
    position: absolute;
    top: -35px;
    width: 69px;
    height: 9px;
    border-radius: 0 0 8px 8px;
    background-color: #1a36ff;
}
.home-bar {
    width: 329px;
    height: 11px;
    margin: 57px auto 0;
    border-radius: 6px;
    background-color: #4a4846;
}
```
